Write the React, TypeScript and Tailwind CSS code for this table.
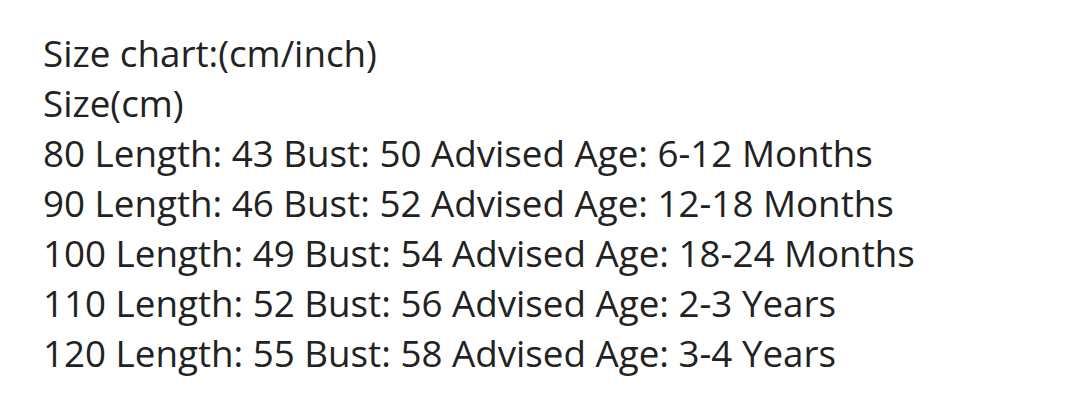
export default function App() {
  const lines = [
    "Size chart:(cm/inch)",
    "Size(cm)",
    "80 Length: 43 Bust: 50 Advised Age: 6-12 Months",
    "90 Length: 46 Bust: 52 Advised Age: 12-18 Months",
    "100 Length: 49 Bust: 54 Advised Age: 18-24 Months",
    "110 Length: 52 Bust: 56 Advised Age: 2-3 Years",
    "120 Length: 55 Bust: 58 Advised Age: 3-4 Years",
  ];
  return (
    <div className="w-[1080px] h-[412px] bg-white pl-[43px] pt-[28px] text-[#222222] text-[36.75px] leading-[50px] font-['Open_Sans',sans-serif]">
      {lines.map((l) => (
        <div key={l} className="whitespace-nowrap">{l}</div>
      ))}
    </div>
  );
}
